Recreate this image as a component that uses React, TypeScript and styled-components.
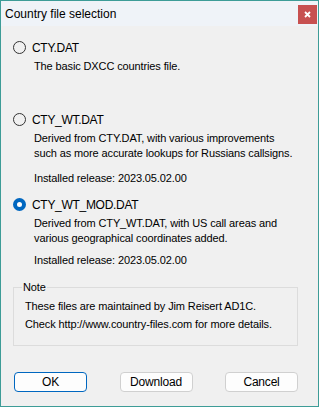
import React, { useState } from 'react'
import styled, { createGlobalStyle } from 'styled-components'

const GlobalStyle = createGlobalStyle`
	html, body {
		margin: 0;
		padding: 0;
		background: #ffffff;
	}
	body {
		font-family: 'Liberation Sans', Arial, sans-serif;
		font-size: 11px;
		letter-spacing: -0.12px;
		color: #000;
	}
`

interface Option {
	id: string
	label: string
	lines: string[]
	release?: string
}

const options: Option[] = [
	{
		id: 'cty',
		label: 'CTY.DAT',
		lines: ['The basic DXCC countries file.'],
	},
	{
		id: 'wt',
		label: 'CTY_WT.DAT',
		lines: [
			'Derived from CTY.DAT, with various improvements',
			'such as more accurate lookups for Russians callsigns.',
		],
		release: '2023.05.02.00',
	},
	{
		id: 'wtmod',
		label: 'CTY_WT_MOD.DAT',
		lines: [
			'Derived from CTY_WT.DAT, with US call areas and',
			'various geographical coordinates added.',
		],
		release: '2023.05.02.00',
	},
]

export default function App() {
	const [selected, setSelected] = useState('wtmod')

	return (
		<>
			<GlobalStyle />
			<Window>
				<TitleBar>
					<Title>Country file selection</Title>
					<CloseButton aria-label="Close">
						<svg width="7" height="7" viewBox="0 0 7 7">
							<path d="M1 1 L6 6 M6 1 L1 6" stroke="#fff" strokeWidth="1.8" />
						</svg>
					</CloseButton>
				</TitleBar>
				<Body>
					{options.map((opt, i) => (
						<OptionBlock key={opt.id} $first={i === 0}>
							<RadioRow onClick={() => setSelected(opt.id)}>
								<Radio $checked={selected === opt.id} />
								<RadioLabel>{opt.label}</RadioLabel>
							</RadioRow>
							<Description>
								{opt.lines.map((l) => (
									<Line key={l}>{l}</Line>
								))}
							</Description>
							{opt.release && (
								<Release $tight={i === options.length - 1}>
									Installed release: {opt.release}
								</Release>
							)}
						</OptionBlock>
					))}

					<GroupBox>
						<Legend>Note</Legend>
						<NoteLine>These files are maintained by Jim Reisert AD1C.</NoteLine>
						<NoteLine>Check http://www.country-files.com for more details.</NoteLine>
					</GroupBox>

					<ButtonRow>
						<Button $default>OK</Button>
						<Button>Download</Button>
						<Button>Cancel</Button>
					</ButtonRow>
				</Body>
			</Window>
		</>
	)
}

const Window = styled.div`
	width: 319px;
	height: 407px;
	box-sizing: border-box;
	border: 1px solid #3d9c97;
	background: #f0f0f0;
	display: flex;
	flex-direction: column;
`

const TitleBar = styled.div`
	height: 25px;
	background: #eff3f8;
	display: flex;
	align-items: center;
	justify-content: space-between;
	padding: 0 1px 0 4px;
`

const Title = styled.span`
	font-size: 12px;
	letter-spacing: 0;
	margin-top: 1px;
`

const CloseButton = styled.div`
	width: 19px;
	height: 19px;
	background: #c75050;
	display: flex;
	align-items: center;
	justify-content: center;
	margin-top: 2px;
`

const Body = styled.div`
	flex: 1;
	display: flex;
	flex-direction: column;
	padding: 0 20px 0 12px;
`

const OptionBlock = styled.div<{ $first?: boolean }>`
	display: flex;
	flex-direction: column;
	margin-top: ${(p) => (p.$first ? '14px' : '11px')};
	min-height: ${(p) => (p.$first ? '61px' : 'auto')};
`

const RadioRow = styled.div`
	display: flex;
	align-items: center;
	gap: 6px;
	height: 15px;
	cursor: default;
`

const Radio = styled.span<{ $checked?: boolean }>`
	width: 13px;
	height: 13px;
	box-sizing: border-box;
	border-radius: 50%;
	flex: none;
	${(p) =>
		p.$checked
			? `
		border: 4px solid #0067c0;
		background: #ffffff;
	`
			: `
		border: 1px solid #333333;
		background: #f0f0f0;
	`}
`

const RadioLabel = styled.span`
	font-size: 12px;
	letter-spacing: -0.3px;
`

const Description = styled.div`
	margin: 4px 0 0 21px;
	display: flex;
	flex-direction: column;
`

const Line = styled.div`
	line-height: 15px;
	white-space: nowrap;
`

const Release = styled.div<{ $tight?: boolean }>`
	margin: ${(p) => (p.$tight ? '7px' : '10px')} 0 0 21px;
	line-height: 15px;
`

const GroupBox = styled.fieldset`
	margin: 12px 0 0 0;
	padding: 3px 0 9px 11px;
	border: 1px solid #dcdcdc;
	border-radius: 0;
	height: 66px;
	box-sizing: border-box;
	min-width: 0;
`

const Legend = styled.legend`
	padding: 0 1px;
	margin-left: -3px;
	font-size: 11px;
	line-height: 14px;
`

const NoteLine = styled.div`
	line-height: 18px;
	white-space: nowrap;
`

const ButtonRow = styled.div`
	display: flex;
	justify-content: space-between;
	margin-top: 26px;
	padding: 0 0 0 1px;
`

const Button = styled.button<{ $default?: boolean }>`
	width: 73px;
	height: 20px;
	box-sizing: border-box;
	font-family: 'Liberation Sans', Arial, sans-serif;
	font-size: 12px;
	letter-spacing: -0.2px;
	color: #000;
	background: #fdfdfd;
	border: 1px solid ${(p) => (p.$default ? '#0067c0' : '#d0d0d0')};
	border-radius: 4px;
	padding: 0;
`
